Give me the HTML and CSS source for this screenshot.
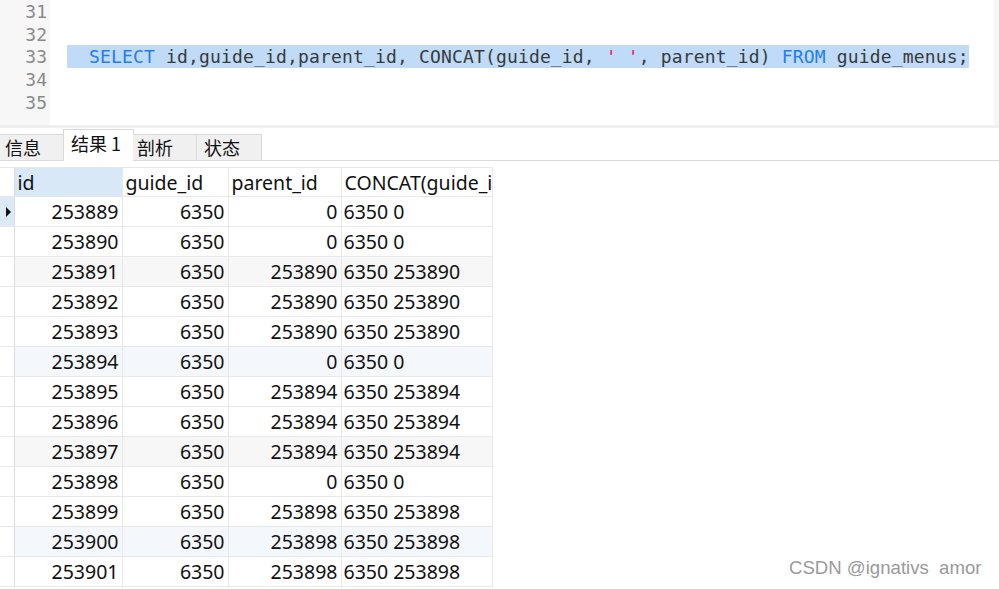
FILE: index.html
```html
<!DOCTYPE html>
<html>
<head>
<meta charset="utf-8">
<link rel="stylesheet" href="styles.css">
</head>
<body>
<div class="editor">
  <div class="gutter">
    <div class="ln">31</div>
    <div class="ln">32</div>
    <div class="ln">33</div>
    <div class="ln">34</div>
    <div class="ln">35</div>
  </div>
  <div class="code">
    <div class="cl"></div>
    <div class="cl"></div>
    <div class="cl"><span class="sel">  <span class="kw">SELECT</span> id,guide_id,parent_id, CONCAT(guide_id, <span class="str">' '</span>, parent_id) <span class="kw">FROM</span> guide_menus;</span></div>
    <div class="cl"></div>
    <div class="cl"></div>
  </div>
  <div class="vscroll"></div>
</div>
<div class="splitter"></div>
<div class="tabbar">
  <div class="tab">信息</div>
  <div class="tab active">结果 1</div>
  <div class="tab">剖析</div>
  <div class="tab">状态</div>
  <div class="tabfill"></div>
</div>
<div class="gridwrap">
<table class="grid">
  <colgroup>
    <col class="c0"><col class="c1"><col class="c2"><col class="c3"><col class="c4">
  </colgroup>
  <thead>
    <tr><th class="ind"></th><th class="selcol">id</th><th>guide_id</th><th>parent_id</th><th class="clip">CONCAT(guide_i</th></tr>
  </thead>
  <tbody>
    <tr class="cur"><td class="ind"><span class="arrow"></span></td><td>253889</td><td>6350</td><td>0</td><td class="l">6350 0</td></tr>
    <tr><td class="ind"></td><td>253890</td><td>6350</td><td>0</td><td class="l">6350 0</td></tr>
    <tr class="g"><td class="ind"></td><td>253891</td><td>6350</td><td>253890</td><td class="l">6350 253890</td></tr>
    <tr><td class="ind"></td><td>253892</td><td>6350</td><td>253890</td><td class="l">6350 253890</td></tr>
    <tr><td class="ind"></td><td>253893</td><td>6350</td><td>253890</td><td class="l">6350 253890</td></tr>
    <tr class="b"><td class="ind"></td><td>253894</td><td>6350</td><td>0</td><td class="l">6350 0</td></tr>
    <tr><td class="ind"></td><td>253895</td><td>6350</td><td>253894</td><td class="l">6350 253894</td></tr>
    <tr><td class="ind"></td><td>253896</td><td>6350</td><td>253894</td><td class="l">6350 253894</td></tr>
    <tr class="g"><td class="ind"></td><td>253897</td><td>6350</td><td>253894</td><td class="l">6350 253894</td></tr>
    <tr><td class="ind"></td><td>253898</td><td>6350</td><td>0</td><td class="l">6350 0</td></tr>
    <tr><td class="ind"></td><td>253899</td><td>6350</td><td>253898</td><td class="l">6350 253898</td></tr>
    <tr class="b"><td class="ind"></td><td>253900</td><td>6350</td><td>253898</td><td class="l">6350 253898</td></tr>
    <tr><td class="ind"></td><td>253901</td><td>6350</td><td>253898</td><td class="l">6350 253898</td></tr>
  </tbody>
</table>
</div>
<div class="watermark">CSDN @ignativs&nbsp; amor</div>
</body>
</html>
```

FILE: styles.css
```css
html, body {
  margin: 0;
  padding: 0;
  background: #ffffff;
  overflow: hidden;
}
body {
  width: 999px;
  height: 589px;
  position: relative;
  font-family: "Noto Sans", "Noto Sans CJK SC", sans-serif;
}
.editor {
  display: flex;
  height: 125px;
  background: #ffffff;
}
.gutter {
  width: 50px;
  background: #f7f7f7;
  box-sizing: border-box;
  padding-right: 3px;
}
.ln {
  height: 22.7px;
  line-height: 23.5px;
  text-align: right;
  font-family: "DejaVu Sans Mono", monospace;
  font-size: 18px;
  color: #8a8a8a;
}
.code {
  flex: 1;
  padding-left: 17px;
}
.cl {
  height: 22.7px;
  line-height: 23.5px;
  font-family: "DejaVu Sans Mono", monospace;
  font-size: 18px;
  letter-spacing: 0.16px;
  color: #3a3a3a;
  white-space: pre;
}
.sel {
  display: inline-block;
  height: 22.7px;
  width: 902px;
  background: #bfdbf8;
}
.kw { color: #1f7ef0; }
.str { color: #e8245a; }
.vscroll {
  width: 5px;
  background: #f6f6f6;
}
.splitter {
  height: 3px;
  background: #efefef;
}
.tabbar {
  display: flex;
  align-items: flex-end;
  height: 33px;
}
.tab {
  box-sizing: border-box;
  height: 27px;
  width: 64px;
  background: #f0f0f0;
  border-top: 1px solid #d9d9d9;
  border-bottom: 1px solid #d9d9d9;
  border-right: 1px solid #d9d9d9;
  font-family: "Noto Sans CJK SC", sans-serif;
  font-size: 18px;
  line-height: 25px;
  color: #111;
  padding-left: 5px;
}
.tab.active {
  width: 71px;
  height: 32px;
  background: #ffffff;
  border-bottom: none;
  border-left: 1px solid #d9d9d9;
  margin-left: -1px;
  margin-right: -1px;
  line-height: 27px;
  padding-left: 7px;
}
.tab:nth-child(3) { width: 64px; padding-left: 4px; }
.tab:nth-child(4) { width: 65px; padding-left: 7px; }
.tabfill {
  flex: 1;
  border-bottom: 1px solid #d9d9d9;
}
.gridwrap {
  padding-top: 6px;
}
.grid {
  border-collapse: collapse;
  table-layout: fixed;
  width: 492px;
  font-family: "Noto Sans", sans-serif;
  font-size: 19.5px;
  color: #111;
}
.c0 { width: 14px; }
.c1 { width: 108px; }
.c2 { width: 106px; }
.c3 { width: 113px; }
.c4 { width: 151px; }
.grid th, .grid td {
  border: 1px solid #e8e8e8;
  padding: 0 3px 0 3px;
  white-space: nowrap;
  overflow: hidden;
}
.grid th {
  height: 28px;
  text-align: left;
  font-weight: normal;
  background: #ffffff;
  padding-left: 3px;
}
.grid th.clip { padding-right: 0; }
.grid th.selcol { background: #d8e8f7; }
.grid td {
  height: 29px;
  text-align: right;
}
.grid td.l { text-align: left; padding-left: 2px; }
.grid th.ind, .grid td.ind {
  border-left: none;
  padding: 0;
  background: #ffffff;
  border-right: 1px solid #dcdcdc;
}
.grid tr.cur td.ind { background: #dce9f6; }
.grid tr.g td { background: #f7f7f7; }
.grid tr.b td { background: #f4f8fc; }
.grid tr.g td.ind, .grid tr.b td.ind { background: #ffffff; }
.arrow {
  display: block;
  margin-left: 6px;
  width: 0;
  height: 0;
  border-top: 5px solid transparent;
  border-bottom: 5px solid transparent;
  border-left: 5px solid #111;
}
.watermark {
  position: absolute;
  left: 789px;
  top: 557px;
  font-family: "Liberation Sans", sans-serif;
  font-size: 18.6px;
  color: #9a9a9a;
  white-space: pre;
}
```
